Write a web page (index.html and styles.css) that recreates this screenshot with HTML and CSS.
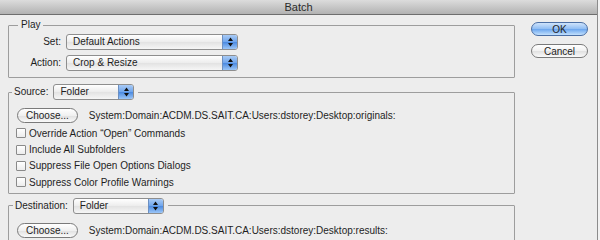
FILE: index.html
```html
<!DOCTYPE html>
<html lang="en">
<head>
  <meta charset="UTF-8">
  <title>Batch</title>
  <link rel="stylesheet" href="styles.css">
</head>
<body>
  <div class="window">
    <div class="titlebar">Batch</div>
    <div class="content">
      <div class="groups">
        <fieldset class="group play">
          <legend>Play</legend>
          <div class="form-row">
            <span class="row-label">Set:</span>
            <div class="popup wide"><span class="popup-text">Default Actions</span><span class="arrows"><svg width="7" height="10" viewBox="0 0 7 10"><path d="M3.5 0.5 L6 4 L1 4 Z M3.5 9.5 L6 6 L1 6 Z" fill="#111"/></svg></span></div>
          </div>
          <div class="form-row">
            <span class="row-label">Action:</span>
            <div class="popup wide"><span class="popup-text">Crop &amp; Resize</span><span class="arrows"><svg width="7" height="10" viewBox="0 0 7 10"><path d="M3.5 0.5 L6 4 L1 4 Z M3.5 9.5 L6 6 L1 6 Z" fill="#111"/></svg></span></div>
          </div>
        </fieldset>

        <fieldset class="group source">
          <legend>
            <span class="legend-label">Source:</span>
            <div class="popup short"><span class="popup-text">Folder</span><span class="arrows"><svg width="7" height="10" viewBox="0 0 7 10"><path d="M3.5 0.5 L6 4 L1 4 Z M3.5 9.5 L6 6 L1 6 Z" fill="#111"/></svg></span></div>
          </legend>
          <div class="choose-row">
            <button class="capsule">Choose...</button>
            <span class="path">System:Domain:ACDM.DS.SAIT.CA:Users:dstorey:Desktop:originals:</span>
          </div>
          <label class="check"><span class="box"></span>Override Action “Open” Commands</label>
          <label class="check"><span class="box"></span>Include All Subfolders</label>
          <label class="check"><span class="box"></span>Suppress File Open Options Dialogs</label>
          <label class="check"><span class="box"></span>Suppress Color Profile Warnings</label>
        </fieldset>

        <fieldset class="group destination">
          <legend>
            <span class="legend-label">Destination:</span>
            <div class="popup medium"><span class="popup-text">Folder</span><span class="arrows"><svg width="7" height="10" viewBox="0 0 7 10"><path d="M3.5 0.5 L6 4 L1 4 Z M3.5 9.5 L6 6 L1 6 Z" fill="#111"/></svg></span></div>
          </legend>
          <div class="choose-row">
            <button class="capsule">Choose...</button>
            <span class="path">System:Domain:ACDM.DS.SAIT.CA:Users:dstorey:Desktop:results:</span>
          </div>
        </fieldset>
      </div>

      <div class="actions">
        <button class="capsule default">OK</button>
        <button class="capsule">Cancel</button>
      </div>
    </div>
  </div>
</body>
</html>
```

FILE: styles.css
```css
body {
  margin: 0;
  width: 600px;
  height: 240px;
  overflow: hidden;
  background-color: #f2f2f2;
  font-family: "Liberation Sans", Arial, sans-serif;
  font-size: 10px;
  color: #1e1e1e;
}
.window {
  width: 597px;
  height: 240px;
  background-color: #ededed;
  border-right: 1px solid #8c8c8c;
  overflow: hidden;
}
.titlebar {
  height: 14px;
  line-height: 14px;
  text-align: center;
  font-size: 11px;
  color: #2a2a2a;
  background: linear-gradient(#dcdcdc, #b2b2b2);
  border-bottom: 1px solid #6e6e6e;
}
.content {
  display: flex;
  padding-left: 8px;
}
.groups {
  width: 507px;
}
.group {
  margin: 0;
  padding: 0 0 0 8px;
  border: 1px solid #9d9d9d;
  border-radius: 1px;
}
.group legend {
  padding: 0 3px;
  line-height: 12px;
}
.play {
  margin-top: 4px;
  padding: 0 0 4px 0;
}
.play legend {
  margin-left: 9px;
}
.form-row {
  display: flex;
  align-items: center;
  height: 21px;
}
.row-label {
  width: 52px;
  text-align: right;
  padding-right: 5px;
}
.popup {
  display: flex;
  align-items: center;
  height: 14px;
  border: 1px solid #8e8e8e;
  border-radius: 3px;
  background: linear-gradient(#ffffff, #ececec 50%, #e2e2e2 51%, #f6f6f6);
  overflow: hidden;
}
.popup.wide {
  width: 170px;
}
.popup.short {
  width: 79px;
}
.popup.medium {
  width: 89px;
}
.popup-text {
  flex: 1;
  padding-left: 6px;
}
.arrows {
  width: 14px;
  height: 14px;
  display: flex;
  align-items: center;
  justify-content: center;
  background: linear-gradient(#a9cbf5, #6ea4ec 50%, #4a89e0 51%, #9cc6f7);
  border-left: 1px solid #6b8fc2;
}
.source {
  margin-top: 6px;
  padding: 7px 0 2px 8px;
}
.source legend,
.destination legend {
  display: flex;
  align-items: center;
  height: 16px;
  padding: 0 4px 0 2px;
  margin-left: -5px;
}
.destination legend {
  margin-left: -4px;
}
.legend-label {
  padding-right: 5px;
}
.destination {
  margin-top: 4px;
  padding: 8px 0 20px 8px;
}
.choose-row {
  display: flex;
  align-items: center;
  height: 17px;
}
.capsule {
  font-family: inherit;
  font-size: 10px;
  color: #1e1e1e;
  height: 15px;
  padding: 0 8px;
  border: 1px solid #7a7a7a;
  border-radius: 8px;
  background: linear-gradient(#ffffff, #f0f0f0 50%, #e0e0e0 51%, #fafafa);
}
.path {
  margin-left: 11px;
}
.check {
  display: flex;
  align-items: center;
  height: 16.4px;
}
.check:first-of-type {
  margin-top: 1px;
}
.box {
  width: 10px;
  height: 10px;
  margin: 0 3px 0 -1px;
  border: 1px solid #8a8a8a;
  border-radius: 1px;
  background: linear-gradient(#ffffff, #ececec);
  box-sizing: border-box;
}
.actions {
  display: flex;
  flex-direction: column;
  gap: 8px;
  margin: 7px 0 0 16px;
}
.actions .capsule {
  width: 57px;
  height: 14px;
}
.capsule.default {
  border-color: #4b6fa5;
  background: linear-gradient(#cfe3fb, #8ebcf3 50%, #6aa5ee 51%, #c2e0fd);
}
```
